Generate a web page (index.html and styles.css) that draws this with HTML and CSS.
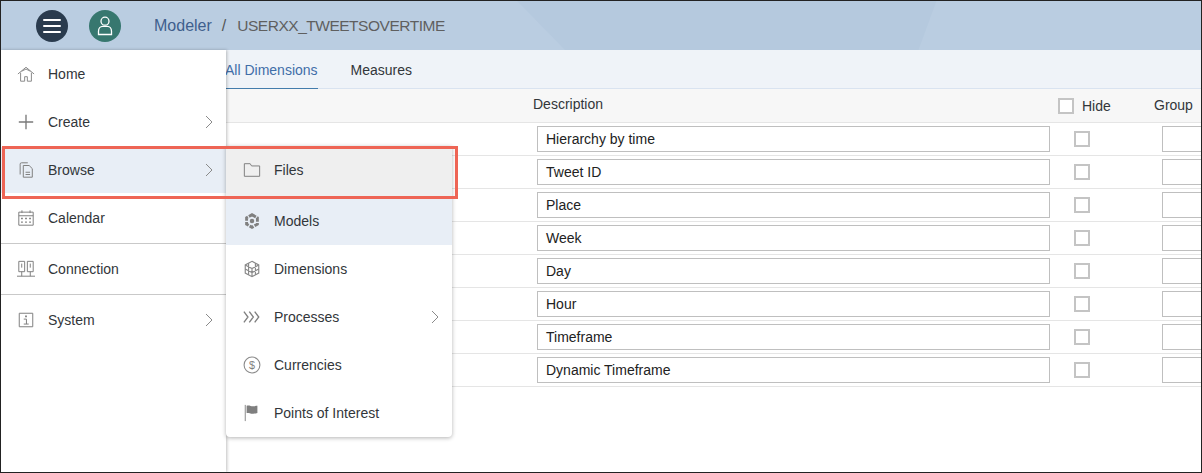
FILE: index.html
```html
<!DOCTYPE html>
<html lang="en">
<head>
<meta charset="utf-8">
<title>Modeler</title>
<link rel="stylesheet" href="styles.css">
</head>
<body>
<div class="frame">
  <header class="shell">
    <svg class="hdr-bg" viewBox="0 0 1202 50" preserveAspectRatio="none"><polygon points="517,0 937,0 919,50 565,50" fill="#b5c9de"/></svg>
    <button class="round hamburger"><span></span><span></span><span></span></button>
    <button class="round avatar">
      <svg width="18" height="20" viewBox="0 0 18 20" fill="none" stroke="#fff" stroke-width="1.3"><circle cx="9" cy="5.2" r="4"/><path d="M2.5 18.5v-3.200c0-3 2-5 4-5h5c2 0 4 2 4 5v3.200z"/></svg>
    </button>
    <nav class="crumbs"><span class="crumb-link">Modeler</span><span class="crumb-sep">/</span><span class="crumb-cur">USERXX_TWEETSOVERTIME</span></nav>
  </header>

  <div class="tabs">
    <span class="tab tab-active">All Dimensions</span>
    <span class="tab">Measures</span>
  </div>

  <div class="table">
    <div class="thead">
      <span class="th-desc">Description</span>
      <span class="th-hide"><i class="check"></i>Hide</span>
      <span class="th-group">Group</span>
    </div>
    <div class="row"><span class="field">Hierarchy by time</span><i class="check"></i><span class="field-small"></span></div>
    <div class="row"><span class="field">Tweet ID</span><i class="check"></i><span class="field-small"></span></div>
    <div class="row"><span class="field">Place</span><i class="check"></i><span class="field-small"></span></div>
    <div class="row"><span class="field">Week</span><i class="check"></i><span class="field-small"></span></div>
    <div class="row"><span class="field">Day</span><i class="check"></i><span class="field-small"></span></div>
    <div class="row"><span class="field">Hour</span><i class="check"></i><span class="field-small"></span></div>
    <div class="row"><span class="field">Timeframe</span><i class="check"></i><span class="field-small"></span></div>
    <div class="row"><span class="field">Dynamic Timeframe</span><i class="check"></i><span class="field-small"></span></div>
  </div>

  <aside class="menu">
    <a class="item"><svg class="ico" viewBox="0 0 20 20" fill="none" stroke="#8a8a8a" stroke-width="1.100"><path d="M1 10 10 2.500l9 7.500M4 8.500V18h4.500v-5h3v5H16V8.500M5 7 10 4.500 15 7"/></svg><span class="label">Home</span></a>
    <a class="item"><svg class="ico" viewBox="0 0 20 20" fill="none" stroke="#7a7a7a" stroke-width="1.500"><path d="M10 2v16M2 10h16"/></svg><span class="label">Create</span><svg class="chev" viewBox="0 0 8 14" fill="none" stroke="#8a8a8a"><path d="M1 1l6 6-6 6"/></svg></a>
    <a class="item item-sel"><svg class="ico" viewBox="0 0 20 20" fill="none" stroke="#7f7f7f" stroke-width="1.100"><path d="M3.500 15V3.500C3.500 2.500 4 2 5 2h7M7 5h6.500L17 8.500V18H7zM9.500 12.500h5M9.500 15h5"/></svg><span class="label">Browse</span><svg class="chev" viewBox="0 0 8 14" fill="none" stroke="#8a8a8a"><path d="M1 1l6 6-6 6"/></svg></a>
    <a class="item item-cal"><svg class="ico" viewBox="0 0 20 20" fill="none" stroke="#7f7f7f" stroke-width="1.100"><path d="M2 3.500h16V18H2zM2 7.500h16M5.500 1.500v3M14.500 1.500v3"/><path stroke-width="1.500" stroke-dasharray="2 2.500" d="M4.500 10.500h12M4.500 14.500h12"/></svg><span class="label">Calendar</span></a>
    <a class="item item-con"><svg class="ico" viewBox="0 0 20 20" fill="none" stroke="#7f7f7f" stroke-width="1.100"><path d="M2 1.500h6.500V13H2zM11.500 1.500H18V13h-6.500zM5.250 4v4.500M14.750 4v4.500M5.250 13v5M14.750 13v5M0 18h20"/></svg><span class="label">Connection</span></a>
    <a class="item item-sys"><svg class="ico" viewBox="0 0 20 20" fill="none" stroke="#7f7f7f" stroke-width="1.100"><path d="M2.500 2.500h15v15h-15zM7.500 9h3v5.500M7.500 14.500h5.500"/><path stroke-width="2" d="M10 5v2"/></svg><span class="label">System</span><svg class="chev" viewBox="0 0 8 14" fill="none" stroke="#8a8a8a"><path d="M1 1l6 6-6 6"/></svg></a>
  </aside>

  <div class="submenu">
    <a class="item sub-files"><svg class="ico" viewBox="0 0 20 20" fill="none" stroke="#7f7f7f" stroke-width="1.100"><path d="M1.500 17V3h6.500l1.500 2.500h9V17z"/></svg><span class="label">Files</span></a>
    <a class="item sub-models"><svg class="ico" viewBox="0 0 20 20" fill="none" stroke="#808080"><path stroke-width="3.200" stroke-dasharray="5 1.300" d="M10 3l6 3.500v7L10 17l-6-3.500v-7z"/><circle cx="10" cy="10" r="2.500" fill="#808080" stroke="none"/></svg><span class="label">Models</span></a>
    <a class="item sub-dims"><svg class="ico" viewBox="0 0 20 20" fill="none" stroke="#8a8a8a" stroke-width="1.300"><path d="M10 1.500l7.500 4v9L10 18.500l-7.500-4v-9zM2.500 5.500 10 9.500l7.500-4M10 9.500v9M2.500 10 10 14l7.500-4M6.200 3.500v13M13.800 3.500v13"/></svg><span class="label">Dimensions</span></a>
    <a class="item"><svg class="ico" viewBox="0 0 20 20" fill="none" stroke="#7f7f7f" stroke-width="1.500"><path d="M1 4l4.500 6L1 16M7 4l4.500 6L7 16M13 4l4.500 6-4.500 6"/></svg><span class="label">Processes</span><svg class="chev" viewBox="0 0 8 14" fill="none" stroke="#8a8a8a"><path d="M1 1l6 6-6 6"/></svg></a>
    <a class="item"><svg class="ico" viewBox="0 0 20 20" fill="none" stroke="#8a8a8a" stroke-width="1.200"><circle cx="10" cy="10" r="8.800"/><text class="dollar" x="10" y="14.500" text-anchor="middle">$</text></svg><span class="label">Currencies</span></a>
    <a class="item"><svg class="ico" viewBox="0 0 20 20"><path d="M2.500 1v18" stroke="#8a8a8a" stroke-width="1.100" fill="none"/><path d="M4 2c3-1 5 .8 7.500.5S15 2 16 2v8c-2 .3-3 1-5.500.8S6 9.500 4 10z" fill="#7f7f7f"/></svg><span class="label">Points of Interest</span></a>
  </div>

  <div class="callout"></div>
</div>
</body>
</html>
```
FILE: styles.css
```css
* { box-sizing: border-box; }
html, body { margin: 0; height: 100%; }
body { font-family: "Liberation Sans", Arial, sans-serif; font-size: 14px; color: #32363a; background: #fff; }
.frame { position: relative; width: 1202px; height: 473px; border: 1px solid #222; overflow: hidden; background: #fff; }

.shell { position: relative; height: 49px; background: #bacde1; display: flex; align-items: center; padding-left: 35px; }
.hdr-bg { position: absolute; left: 0; top: 0; width: 100%; height: 100%; }
.round { position: relative; width: 32px; height: 32px; border: 0; padding: 0; border-radius: 50%; display: flex; flex-direction: column; align-items: center; justify-content: center; }
.hamburger { background: #2a3b4e; gap: 4px; margin-right: 21px; }
.hamburger span { display: block; width: 18px; height: 2px; background: #fff; border-radius: 1px; }
.avatar { background: #37776f; margin-right: 33px; }
.crumbs { position: relative; display: flex; align-items: center; font-size: 16px; }
.crumb-link { color: #3f5f8d; }
.crumb-sep { color: #555; margin: 0 11px 0 10px; }
.crumb-cur { color: #5f5f5f; font-size: 15.5px; letter-spacing: -0.48px; }

.tabs { height: 39px; background: #eff3f8; border-bottom: 1px solid #d9e3f0; display: flex; padding-left: 224px; gap: 33px; }
.tab { height: 39px; line-height: 41px; color: #32363a; }
.tab-active { color: #3f6ea8; border-bottom: 1px solid #427cac; }

.thead { position: relative; height: 34px; background: #f7f7f7; border-bottom: 1px solid #e5e5e5; }
.th-desc { position: absolute; left: 532px; top: 7px; }
.th-hide { position: absolute; left: 1057px; top: 9px; display: flex; align-items: center; gap: 8px; }
.th-group { position: absolute; left: 1153px; top: 8px; }
.row { height: 33px; border-bottom: 1px solid #e5e5e5; display: flex; align-items: flex-start; padding: 3px 0 0 536px; }
.field { flex: none; width: 513px; height: 26px; border: 1px solid #bfbfbf; background: #fff; padding-left: 8px; line-height: 24px; margin-right: 24px; color: #222; }
.field-small { flex: none; width: 60px; height: 26px; border: 1px solid #bfbfbf; background: #fff; margin-left: 72px; }
.row .check { margin-top: 5px; }
.check { display: block; width: 16px; height: 16px; border: 2px solid #c4c4c4; background: #fff; flex: none; }

.menu { position: absolute; left: 0; top: 49px; width: 225px; bottom: 0; background: #fff; box-shadow: 1px 0 3px rgba(0,0,0,.25); }
.item { display: flex; align-items: center; height: 48px; padding-left: 16px; color: #32363a; position: relative; }
.ico { width: 18px; height: 18px; flex: none; margin-right: 13px; }
.dollar { font: 12px "Liberation Sans", Arial, sans-serif; fill: #7f7f7f; stroke: none; }
.label { flex: 1; }
.chev { width: 8px; height: 14px; margin-right: 13px; flex: none; }
.item-sel { background: #e8eef6; height: 46px; margin: 1px 0; }
.item-cal { height: 50px; padding-bottom: 1px; border-bottom: 1px solid #c9c9c9; }
.item-con { height: 51px; border-bottom: 1px solid #c9c9c9; }
.item-sys { height: 50px; }

.submenu { position: absolute; left: 225px; top: 145px; width: 226px; background: #fff; border-radius: 0 0 4px 4px; box-shadow: 0 1px 4px rgba(0,0,0,.3); }
.submenu .item { padding: 0 0 0 17px; }
.submenu .sub-files { background: #efefef; height: 50px; padding-bottom: 2px; }
.submenu .sub-models { background: #e8eef6; height: 49px; padding-top: 1px; }
.callout { position: absolute; left: 1px; top: 145px; width: 456px; height: 53px; border: 3px solid #ee6555; pointer-events: none; }
```
